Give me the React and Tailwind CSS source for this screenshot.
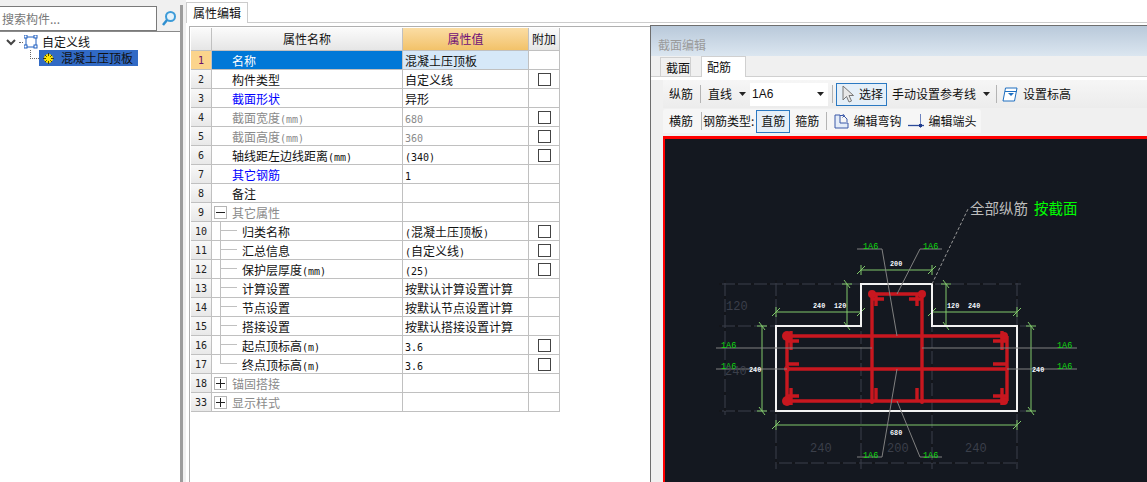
import React from 'react';

const CJK = '"Noto Sans CJK SC", sans-serif';

// ascii runs use a mono face, the rest stays CJK
const Mixed = ({ text }) => (
  <>
    {text.split(/([\x00-\x7f]+)/).map((part, i) =>
      /^[\x00-\x7f]+$/.test(part) ? (
        <span key={i} className="font-['DejaVu_Sans_Mono',monospace] text-[10px]">{part}</span>
      ) : (
        <span key={i}>{part}</span>
      )
    )}
  </>
);

const rows = [
  { n: '1', name: '名称', value: '混凝土压顶板', active: true },
  { n: '2', name: '构件类型', value: '自定义线', check: true },
  { n: '3', name: '截面形状', value: '异形', blue: true },
  { n: '4', name: '截面宽度(mm)', value: '680', check: true, dim: true },
  { n: '5', name: '截面高度(mm)', value: '360', check: true, dim: true },
  { n: '6', name: '轴线距左边线距离(mm)', value: '(340)', check: true },
  { n: '7', name: '其它钢筋', value: '1', blue: true },
  { n: '8', name: '备注', value: '' },
  { n: '9', name: '其它属性', value: '', group: '-' },
  { n: '10', name: '归类名称', value: '(混凝土压顶板)', check: true, child: true },
  { n: '11', name: '汇总信息', value: '(自定义线)', check: true, child: true },
  { n: '12', name: '保护层厚度(mm)', value: '(25)', check: true, child: true },
  { n: '13', name: '计算设置', value: '按默认计算设置计算', child: true },
  { n: '14', name: '节点设置', value: '按默认节点设置计算', child: true },
  { n: '15', name: '搭接设置', value: '按默认搭接设置计算', child: true },
  { n: '16', name: '起点顶标高(m)', value: '3.6', check: true, child: true },
  { n: '17', name: '终点顶标高(m)', value: '3.6', check: true, child: 'last' },
  { n: '18', name: '锚固搭接', value: '', group: '+' },
  { n: '33', name: '显示样式', value: '', group: '+' },
];

const nameColor = (row) => {
  if (row.active) return 'text-white';
  if (row.blue) return 'text-[#0000ff]';
  if (row.dim || row.group) return 'text-[#8a8a8a]';
  return 'text-[#111]';
};

const GroupBox = ({ sign }) => (
  <div className="ml-[2px] mr-[5px] flex h-[13px] w-[13px] items-center justify-center border border-[#b5b5b5] bg-white">
    <svg width="9" height="9" viewBox="0 0 9 9">
      <path d={sign === '+' ? 'M0 4.5H9M4.5 0V9' : 'M0 4.5H9'} stroke="#222" fill="none" />
    </svg>
  </div>
);

const PropRow = ({ row }) => (
  <div className="flex h-[19px] text-[12px]">
    <div
      className={`flex w-[21px] items-center justify-center border-r border-b border-[#c0c0c0] font-['DejaVu_Sans_Mono',monospace] text-[10px] ${
        row.active ? 'bg-[#fbd48c] text-[#6a0f6a]' : 'bg-gradient-to-b from-[#f8f8f8] to-[#e8e8e8] text-[#222]'
      }`}
    >
      {row.n}
    </div>
    <div
      className={`flex w-[191px] items-center whitespace-nowrap border-r border-b border-[#c0c0c0] ${nameColor(row)} ${
        row.active ? 'bg-[#0078d7]' : 'bg-white'
      }`}
    >
      {row.group && <GroupBox sign={row.group} />}
      {row.child && (
        <div className={`ml-[8px] mr-[5px] w-[17px] self-start border-l border-[#c0c0c0] ${row.child === 'last' ? 'h-[9px]' : 'h-[19px]'}`}>
          <div className="h-[9px] border-b border-[#c0c0c0]" />
        </div>
      )}
      {!row.group && !row.child && <div className="w-[20px]" />}
      <span className="pt-[2px]"><Mixed text={row.name} /></span>
    </div>
    <div
      className={`flex w-[126px] items-center whitespace-nowrap border-r border-b border-[#c0c0c0] pl-[2px] ${
        row.active ? 'bg-[#d6e8f8]' : 'bg-white'
      } ${row.dim ? 'text-[#8a8a8a]' : 'text-[#111]'}`}
    >
      <span className="pt-[1px]"><Mixed text={row.value} /></span>
    </div>
    <div className="flex w-[31px] items-center justify-center border-r border-b border-[#c0c0c0] bg-white">
      {row.check && <div className="h-[13px] w-[13px] border border-[#444]" />}
    </div>
  </div>
);

const PropTable = () => (
  <div className="ml-px mt-px w-[369px]">
    <div className="flex h-[23px] text-[12px]">
      <div className="w-[21px] border-r border-b border-[#c0c0c0] bg-gradient-to-b from-[#fbfbfb] to-[#e6e6e6]" />
      <div className="flex w-[191px] items-center justify-center border-r border-b border-[#c0c0c0] bg-gradient-to-b from-[#fbfbfb] to-[#e6e6e6] text-[#111]">属性名称</div>
      <div className="flex w-[126px] items-center justify-center border-r border-b border-[#c0c0c0] bg-gradient-to-b from-[#fbdda4] to-[#f2c269] text-[#6f1078]">属性值</div>
      <div className="flex w-[31px] items-center justify-center border-r border-b border-[#c0c0c0] bg-gradient-to-b from-[#fbfbfb] to-[#e6e6e6] text-[#111]">附加</div>
    </div>
    {rows.map((row) => (
      <PropRow key={row.n} row={row} />
    ))}
  </div>
);

const Sep = () => <div className="mx-[7px] h-[18px] w-px bg-[#b4b4b4]" />;
const Caret = () => (
  <svg width="7" height="4" viewBox="0 0 7 4" className="ml-[7px] mr-[4px]">
    <path d="M0 0H7L3.5 4Z" fill="#222" />
  </svg>
);

const CursorIcon = () => (
  <svg width="12" height="18" viewBox="0 0 12 18" className="ml-[5px] mr-[5px]">
    <path d="M1 1V15L4.5 11.5L7 17L9.5 16L7 10.5H11.5Z" fill="#e8e8e8" stroke="#777" />
  </svg>
);
const ElevationIcon = () => (
  <svg width="16" height="15" viewBox="0 0 16 15" className="mr-[5px]">
    <path d="M3.5 1H15L12.5 14H1Z" fill="#fff" stroke="#1f6fc0" />
    <path d="M3 4.5H14.5" stroke="#1f6fc0" />
    <path d="M6 6H12L9 9Z" fill="#1f6fc0" />
  </svg>
);
const HookIcon = () => (
  <svg width="15" height="15" viewBox="0 0 15 15" className="mr-[4px]">
    <path d="M1 1H6V9H14V14H1Z" fill="#e4ecf8" stroke="#3a58a8" />
    <path d="M6 1.5H9.5L13 5V8" fill="none" stroke="#3a58a8" />
    <path d="M8.5 0L10.5 1.5L8.5 3.5" fill="none" stroke="#3a58a8" />
  </svg>
);
const EndIcon = () => (
  <svg width="16" height="15" viewBox="0 0 16 15" className="mr-[4px]">
    <path d="M0 11.5H16" stroke="#2c4a9a" strokeWidth="1.3" />
    <path d="M12.5 0V14" stroke="#6d83bf" />
    <rect x="11" y="10" width="3" height="3" fill="#1f3a8a" />
  </svg>
);

const Dash = ({ d }) => (
  <>
    <path d={d} stroke="#3b3f4a" fill="none" />
    <path d={d} stroke="#000" strokeDasharray="3 13" fill="none" />
  </>
);

const Tick = ({ x, y, dir }) => (
  <path
    d={dir === 'h' ? `M${x - 4} ${y + 4}L${x + 4} ${y - 4}M${x} ${y - 5}V${y + 5}` : `M${x - 3} ${y - 4}L${x + 3} ${y + 4}M${x - 5} ${y}H${x + 5}`}
    stroke="#80c86a"
    fill="none"
  />
);

const greenLabels = [[863, 250], [923, 250], [721, 349], [721, 370], [1057, 349], [1057, 370], [863, 459], [923, 459]];
const whiteLabels = [[890, 267, '200'], [813, 309, '240'], [834, 309, '120'], [947, 309, '120'], [968, 309, '240'], [749, 373, '240'], [1032, 373, '240'], [890, 436, '680']];
const dimLabels = [[726, 311, '120'], [725, 376, '240'], [810, 453, '240'], [887, 453, '200'], [965, 453, '240']];

const Drawing = () => (
  <svg width="482" height="342" viewBox="665 140 482 342" className="block">
    {/* construction lines */}
    <Dash d="M719 285H861M932 285H1021M719 327H776M1017 327H1031M719 412H776M1017 412H1031M776 464H1017" />
    <Dash d="M725 281V416M776 281V327M776 412V470M861 281V470M932 285V470M1017 281V327M1017 412V470" />
    {/* dimensions */}
    <path d="M861 271H932M776 313H861M932 313H1017M847 285V327M946 285V327M762 327V412M1031 327V412M776 426H1017" stroke="#80c86a" fill="none" />
    {[[861, 271], [932, 271], [776, 313], [861, 313], [932, 313], [1017, 313], [776, 426], [1017, 426]].map(([x, y]) => (
      <Tick key={`${x}-${y}`} x={x} y={y} dir="h" />
    ))}
    {[[847, 285], [847, 327], [946, 285], [946, 327], [762, 327], [762, 412], [1031, 327], [1031, 412]].map(([x, y]) => (
      <Tick key={`v${x}-${y}`} x={x} y={y} dir="v" />
    ))}
    {/* section outline */}
    <path d="M861 327V285H932V327H1017V412H776V327Z" stroke="#f2f2f2" strokeWidth="2" fill="none" />
    {/* rebar */}
    <path
      d="M872 295H922M872 295V403M922 295V403M787 337H1007M787 370H1007M787 402H1007M787 337V402M1007 337V402M787 342H799M791 332V351M787 365H799M787 397H799M791 389V406M993 342H1007M1002 332V351M993 365H1007M993 397H1007M1002 389V406M876 295V307M872 300H884M909 300H922M917 295V307M876 389V402M917 389V402"
      stroke="#c8171f"
      strokeWidth="3.4"
      fill="none"
    />
    {[[872, 295, 4], [922, 295, 4], [787, 337, 5], [787, 370, 3], [787, 402, 5], [1004, 337, 4], [1007, 370, 2], [1004, 402, 4], [872, 403, 2], [922, 403, 2]].map(([x, y, r]) => (
      <circle key={`${x}-${y}`} cx={x} cy={y} r={r} fill="#c8171f" />
    ))}
    {/* leaders */}
    <path d="M857 250H882L897 337M920 250L897 295M920 250H942M897 370L882 458H857M897 402L920 458H942M716 349H872M716 370H787M922 349H1077M1007 370H1077" stroke="#808080" fill="none" />
    <path d="M932 285L968 210" stroke="#9a9a9a" strokeDasharray="3 2" fill="none" />
    <text x="970" y="215" fontSize="14.5" fill="#bdbdbd" fontFamily={CJK}>全部纵筋</text>
    <text x="1034" y="215" fontSize="14.5" fill="#00ff00" fontFamily={CJK}>按截面</text>
    {greenLabels.map(([x, y]) => (
      <text key={`${x}-${y}`} x={x} y={y} fontSize="8.5" fill="#10d810" fontFamily="Liberation Mono, monospace">1A6</text>
    ))}
    {whiteLabels.map(([x, y, t]) => (
      <text key={`${x}-${y}`} x={x} y={y} fontSize="6.8" fontWeight="bold" fill="#f4f8ff" fontFamily="Liberation Mono, monospace">{t}</text>
    ))}
    {dimLabels.map(([x, y, t]) => (
      <text key={`${x}-${y}`} x={x} y={y} fontSize="12" fill="#3b3f4a" fontFamily="Liberation Mono, monospace">{t}</text>
    ))}
  </svg>
);

const SectionDialog = () => (
  <div className="mt-[2px] flex h-[457px] w-[497px] flex-col overflow-hidden border-l border-t border-[#6e6e6e] bg-[#f0f0f0] text-[12px] text-[#111]">
    <div className="flex h-[30px] items-end bg-gradient-to-b from-[#b9c9da] to-[#dbe6f0] pb-[2px] pl-[7px] text-[#9a9a9a]">截面编辑</div>
    <div className="flex h-[21px] items-end border-b border-[#d0d0d0] pl-[9px]">
      <div className="flex h-[19px] w-[31px] items-center border border-b-0 border-[#d0d0d0] bg-[#f0f0f0] pl-[5px] pt-[2px]">截面</div>
      <div className="ml-[10px] -mb-px flex h-[21px] w-[45px] items-center border border-b-0 border-[#d0d0d0] bg-white pl-[5px]">配筋</div>
    </div>
    <div className="h-[3px] bg-white" />
    <div className="ml-[12px] flex h-[28px] items-center bg-gradient-to-b from-[#f6f6f6] to-[#ececec] pl-[6px]">
      <span>纵筋</span>
      <Sep />
      <span>直线</span>
      <Caret />
      <div className="flex h-[23px] w-[78px] items-center justify-between bg-white pl-[2px] pr-[4px]">
        <span className="font-['Liberation_Sans',sans-serif]">1A6</span>
        <svg width="7" height="4" viewBox="0 0 7 4"><path d="M0 0H7L3.5 4Z" fill="#222" /></svg>
      </div>
      <div className="mx-[4px] h-[18px] w-px bg-[#b4b4b4]" />
      <div className="ml-[-1px] flex h-[23px] w-[51px] items-center border border-[#2b79c2] bg-[#e5eff8]">
        <CursorIcon />
        <span>选择</span>
      </div>
      <span className="ml-[5px]">手动设置参考线</span>
      <Caret />
      <div className="mr-[5px] ml-[2px] h-[18px] w-px bg-[#b4b4b4]" />
      <ElevationIcon />
      <span>设置标高</span>
    </div>
    <div className="ml-[12px] mt-px flex h-[24px] w-[318px] items-center rounded-t-[3px] bg-[#f6f6f6] pl-[6px]">
      <span>横筋</span>
      <div className="mx-[8px] h-[18px] w-px bg-[#b4b4b4]" />
      <span className="-ml-[7px] whitespace-nowrap">钢筋类型:</span>
      <div className="ml-[2px] flex h-[23px] w-[34px] items-center justify-center border border-[#2b79c2] bg-[#e5eff8]">直筋</div>
      <span className="ml-[5px]">箍筋</span>
      <Sep />
      <HookIcon />
      <span>编辑弯钩</span>
      <div className="w-[7px]" />
      <EndIcon />
      <span>编辑端头</span>
    </div>
    <div className="ml-[12px] mt-[3px] flex-1 border-l-2 border-t-[3px] border-[#ff0000] bg-[#141820]">
      <Drawing />
    </div>
  </div>
);

const TreePane = () => (
  <div className="flex-1 border-t border-[#8a8a8a] bg-white pt-[2px] text-[12px] text-[#111]">
    <div className="flex h-[16px] items-center pl-[6px]">
      <svg width="10" height="7" viewBox="0 0 10 7" className="mr-[3px]">
        <path d="M1 1L5 5L9 1" stroke="#444" strokeWidth="2" fill="none" />
      </svg>
      <div className="mr-[1px] h-0 w-[4px] border-t border-dotted border-[#666]" />
      <svg width="14" height="14" viewBox="0 0 14 14" className="mr-[4px]">
        <rect x="2" y="2" width="10" height="10" fill="none" stroke="#1f5fc0" />
        {[[0, 0], [10, 0], [0, 10], [10, 10]].map(([x, y]) => (
          <rect key={`${x}${y}`} x={x} y={y} width="3" height="3" fill="#fff" stroke="#1f5fc0" />
        ))}
      </svg>
      <span>自定义线</span>
    </div>
    <div className="flex">
      <div className="ml-[30px] h-[9px] w-[9px] border-b border-l border-dotted border-[#666]" />
      <div className="flex h-[16px] w-[99px] items-center bg-[#316ac5] pl-[4px]">
        <svg width="11" height="11" viewBox="0 0 11 11" className="mr-[7px]">
          <circle cx="5.5" cy="5.5" r="4.5" fill="#ffe600" />
          <path d="M5.5 0V11M0 5.5H11M2 2L9 9M9 2L2 9" stroke="#4a4000" />
          <circle cx="5.5" cy="5.5" r="2.5" fill="#ffe600" />
        </svg>
        <span>混凝土压顶板</span>
      </div>
    </div>
  </div>
);

export default function App() {
  return (
    <div className="flex h-[482px] w-[1147px] overflow-hidden bg-white" style={{ fontFamily: CJK }}>
      <div className="flex w-[180px] flex-col bg-[#f0f0f0]">
        <div className="mt-[6px] flex h-[25px] items-start">
          <div className="flex h-[25px] w-[157px] items-center border border-l-0 border-[#7a7a7a] bg-white pl-[2px] text-[12px] text-[#777]">搜索构件...</div>
          <svg width="16" height="17" viewBox="0 0 16 17" className="ml-[4px] mt-[4px]">
            <circle cx="9.5" cy="6.5" r="4.5" fill="#e4f2fb" stroke="#3d9bd8" strokeWidth="2" />
            <path d="M6 10L2 15" stroke="#2f8fd0" strokeWidth="2.5" />
          </svg>
        </div>
        <TreePane />
      </div>
      <div className="flex w-[6px] bg-[#f0f0f0] pt-[5px]">
        <div className="w-[3px] bg-[#9c9c9c]" />
      </div>
      <div className="flex min-w-0 flex-1 flex-col">
        <div className="flex h-[23px] bg-white">
          <div className="mt-[2px] flex h-[21px] w-[62px] items-center justify-center border border-b-0 border-[#cccccc] bg-white text-[12px] text-[#111]">属性编辑</div>
          <div className="flex-1 self-end border-b border-[#cccccc]" />
        </div>
        <div className="flex flex-1 items-start">
          <div className="ml-[3px] mt-[3px] h-[456px] flex-1 border-l border-t border-[#b0b0b0]">
            <PropTable />
          </div>
          <SectionDialog />
        </div>
      </div>
    </div>
  );
}
